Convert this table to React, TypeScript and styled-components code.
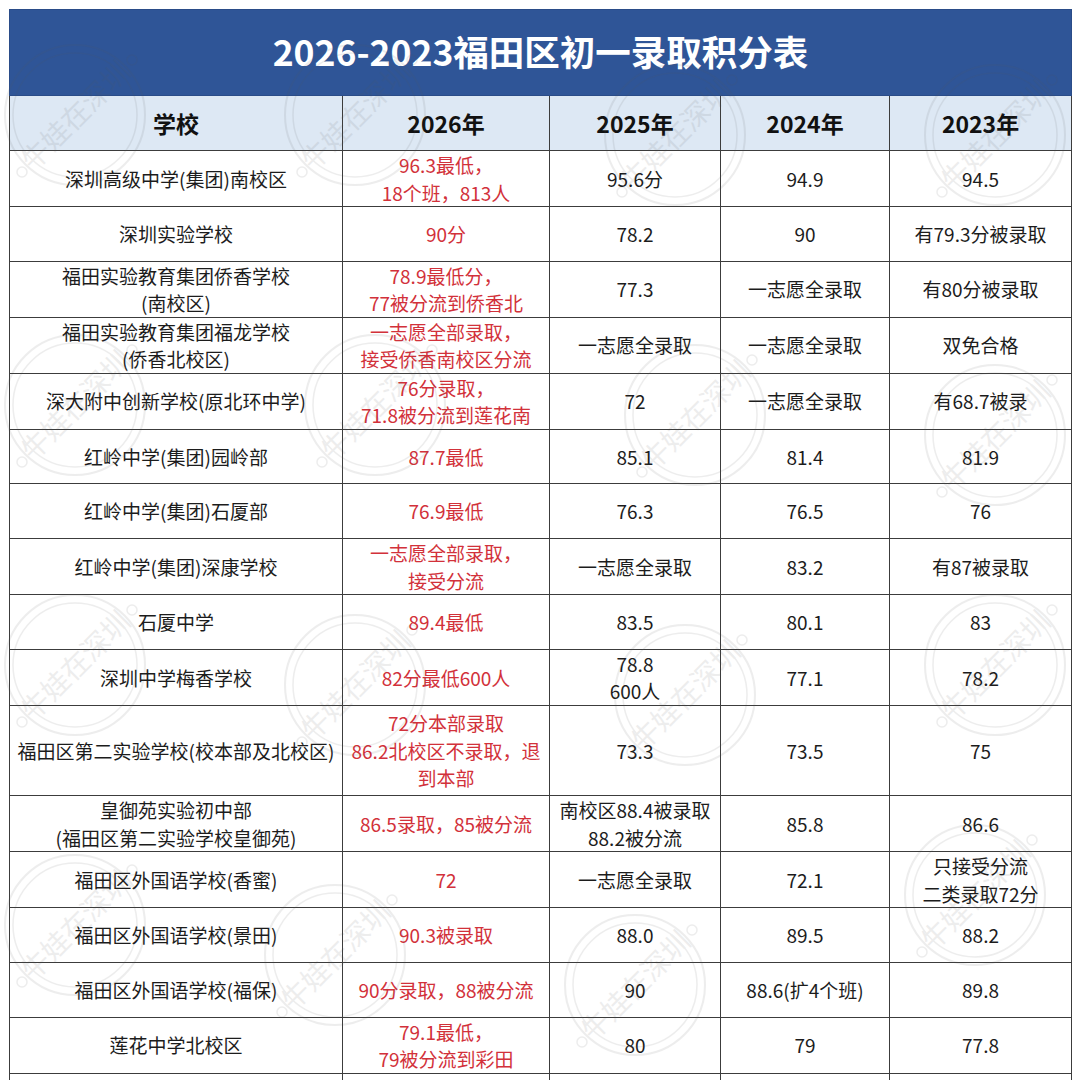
import React from 'react';
import styled, { createGlobalStyle } from 'styled-components';

const GlobalStyle = createGlobalStyle`
  html, body {
    margin: 0;
    padding: 0;
    background: #ffffff;
  }
  body {
    font-family: 'Noto Sans CJK SC', 'Noto Sans', sans-serif;
  }
`;

const Page = styled.div`
  width: 1080px;
  padding: 9px 9px 0 9px;
  box-sizing: border-box;
  position: relative;
  background: #ffffff;
`;

const Table = styled.table`
  width: 1062px;
  border-collapse: collapse;
  table-layout: fixed;
`;

const TitleRow = styled.tr`
  height: 86px;
`;

const TitleCell = styled.th`
  background: #2f5597;
  color: #ffffff;
  font-size: 35.5px;
  line-height: 44px;
  font-weight: 700;
  text-align: center;
  padding: 0 0 4px 0;
  border: 1px solid #2a4c88;
`;

const HeadRow = styled.tr`
  height: 55px;
`;

const HeadCell = styled.th`
  background: #dde8f4;
  color: #111111;
  font-size: 23px;
  line-height: 30px;
  font-weight: 700;
  text-align: center;
  padding: 0;
  border: 1px solid #3c3c3c;
`;

const Row = styled.tr<{ $tall?: boolean }>`
  height: ${(p) => (p.$tall ? '90.5px' : '54.7px')};
`;

const Cell = styled.td<{ $red?: boolean }>`
  border: 1px solid #3c3c3c;
  text-align: center;
  vertical-align: middle;
  font-size: 19px;
  line-height: 27.5px;
  color: ${(p) => (p.$red ? '#d2313a' : '#1c1c1c')};
  padding: 0;
  white-space: pre;
`;

const Watermarks = styled.div`
  position: absolute;
  inset: 0;
  pointer-events: none;
  overflow: hidden;
`;

const Stamp = styled.svg`
  position: absolute;
  width: 150px;
  height: 150px;
  opacity: 0.1;
`;

type RowData = {
  school: string;
  y2026: string;
  y2025: string;
  y2024: string;
  y2023: string;
  tall?: boolean;
};

const rows: RowData[] = [
  { school: '深圳高级中学(集团)南校区', y2026: '96.3最低，\n18个班，813人', y2025: '95.6分', y2024: '94.9', y2023: '94.5' },
  { school: '深圳实验学校', y2026: '90分', y2025: '78.2', y2024: '90', y2023: '有79.3分被录取' },
  { school: '福田实验教育集团侨香学校\n(南校区)', y2026: '78.9最低分，\n77被分流到侨香北', y2025: '77.3', y2024: '一志愿全录取', y2023: '有80分被录取' },
  { school: '福田实验教育集团福龙学校\n(侨香北校区)', y2026: '一志愿全部录取，\n接受侨香南校区分流', y2025: '一志愿全录取', y2024: '一志愿全录取', y2023: '双免合格' },
  { school: '深大附中创新学校(原北环中学)', y2026: '76分录取，\n71.8被分流到莲花南', y2025: '72', y2024: '一志愿全录取', y2023: '有68.7被录' },
  { school: '红岭中学(集团)园岭部', y2026: '87.7最低', y2025: '85.1', y2024: '81.4', y2023: '81.9' },
  { school: '红岭中学(集团)石厦部', y2026: '76.9最低', y2025: '76.3', y2024: '76.5', y2023: '76' },
  { school: '红岭中学(集团)深康学校', y2026: '一志愿全部录取，\n接受分流', y2025: '一志愿全录取', y2024: '83.2', y2023: '有87被录取' },
  { school: '石厦中学', y2026: '89.4最低', y2025: '83.5', y2024: '80.1', y2023: '83' },
  { school: '深圳中学梅香学校', y2026: '82分最低600人', y2025: '78.8\n600人', y2024: '77.1', y2023: '78.2' },
  { school: '福田区第二实验学校(校本部及北校区)', y2026: '72分本部录取\n86.2北校区不录取，退\n到本部', y2025: '73.3', y2024: '73.5', y2023: '75', tall: true },
  { school: '皇御苑实验初中部\n(福田区第二实验学校皇御苑)', y2026: '86.5录取，85被分流', y2025: '南校区88.4被录取\n88.2被分流', y2024: '85.8', y2023: '86.6' },
  { school: '福田区外国语学校(香蜜)', y2026: '72', y2025: '一志愿全录取', y2024: '72.1', y2023: '只接受分流\n二类录取72分' },
  { school: '福田区外国语学校(景田)', y2026: '90.3被录取', y2025: '88.0', y2024: '89.5', y2023: '88.2' },
  { school: '福田区外国语学校(福保)', y2026: '90分录取，88被分流', y2025: '90', y2024: '88.6(扩4个班)', y2023: '89.8' },
  { school: '莲花中学北校区', y2026: '79.1最低，\n79被分流到彩田', y2025: '80', y2024: '79', y2023: '77.8' },
  { school: '', y2026: '', y2025: '', y2024: '', y2023: '' },
];

const stampSpots = [
  [0, 40], [280, 40], [600, 60], [920, 60],
  [0, 330], [300, 330], [620, 340], [920, 360],
  [0, 590], [280, 610], [610, 620], [920, 590],
  [0, 850], [260, 880], [560, 910], [900, 820],
];

const WatermarkStamp: React.FC<{ left: number; top: number }> = ({ left, top }) => (
  <Stamp viewBox="0 0 150 150" style={{ left, top }}>
    <circle cx="75" cy="75" r="70" fill="none" stroke="#555" strokeWidth="2" />
    <circle cx="75" cy="75" r="62" fill="none" stroke="#555" strokeWidth="1.5" />
    <circle cx="22" cy="132" r="5" fill="none" stroke="#555" strokeWidth="1.5" />
    <circle cx="132" cy="20" r="5" fill="none" stroke="#555" strokeWidth="1.5" />
    <text
      x="75"
      y="86"
      textAnchor="middle"
      fontSize="28"
      fill="#555"
      fontFamily="'Noto Sans CJK SC', sans-serif"
      transform="rotate(-45 75 75)"
    >
      牛娃在深圳
    </text>
  </Stamp>
);

const App: React.FC = () => (
  <Page>
    <GlobalStyle />
    <Table>
      <colgroup>
        <col style={{ width: 333 }} />
        <col style={{ width: 207 }} />
        <col style={{ width: 171 }} />
        <col style={{ width: 169 }} />
        <col style={{ width: 182 }} />
      </colgroup>
      <thead>
        <TitleRow>
          <TitleCell colSpan={5}>2026-2023福田区初一录取积分表</TitleCell>
        </TitleRow>
        <HeadRow>
          <HeadCell>学校</HeadCell>
          <HeadCell>2026年</HeadCell>
          <HeadCell>2025年</HeadCell>
          <HeadCell>2024年</HeadCell>
          <HeadCell>2023年</HeadCell>
        </HeadRow>
      </thead>
      <tbody>
        {rows.map((r, i) => (
          <Row key={i} $tall={r.tall}>
            <Cell>{r.school}</Cell>
            <Cell $red>{r.y2026}</Cell>
            <Cell>{r.y2025}</Cell>
            <Cell>{r.y2024}</Cell>
            <Cell>{r.y2023}</Cell>
          </Row>
        ))}
      </tbody>
    </Table>
    <Watermarks>
      {stampSpots.map(([l, t], i) => (
        <WatermarkStamp key={i} left={l} top={t} />
      ))}
    </Watermarks>
  </Page>
);

export default App;
